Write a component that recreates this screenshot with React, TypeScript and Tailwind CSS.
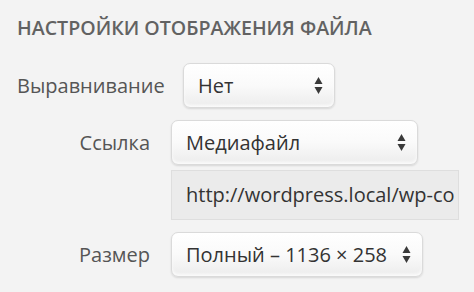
function Arrows() {
  return (
    <svg width="9" height="19" viewBox="0 0 9 19" className="shrink-0">
      <path d="M4.5 1 L8.5 8 L0.5 8 Z" fill="#3a3a3a" />
      <path d="M4.5 18 L8.5 11 L0.5 11 Z" fill="#3a3a3a" />
    </svg>
  );
}

function Select({ value, width }: { value: string; width: string }) {
  return (
    <div
      className={`${width} h-[45px] flex items-center justify-between pl-[14px] pr-[11px] rounded-[7px] border border-[#dadada] bg-gradient-to-b from-white via-[#fafafa] to-[#ececec] shadow-[0_1px_2px_rgba(0,0,0,0.12),inset_0_-2px_3px_rgba(255,255,255,0.8)] text-[20px] text-[#333]`}
    >
      <span className="whitespace-nowrap">{value}</span>
      <Arrows />
    </div>
  );
}

export default function App() {
  return (
    <div
      className="w-[474px] h-[292px] bg-[#f3f3f3] overflow-hidden"
      style={{ fontFamily: '"Open Sans", "Noto Sans", sans-serif' }}
    >
      <div className="pl-[17px] pt-[14px] flex flex-col">
        <h2 className="text-[19.6px] leading-[28px] font-semibold text-[#626262]">
          НАСТРОЙКИ ОТОБРАЖЕНИЯ ФАЙЛА
        </h2>

        <div className="flex items-center mt-[21px]">
          <span className="w-[146px] text-right text-[20px] text-[#555]">Выравнивание</span>
          <div className="ml-[20px]">
            <Select value="Нет" width="w-[152px]" />
          </div>
        </div>

        <div className="flex items-center mt-[12px]">
          <span className="w-[133px] text-right text-[20px] text-[#555]">Ссылка</span>
          <div className="ml-[21px]">
            <Select value="Медиафайл" width="w-[247px]" />
          </div>
        </div>

        <div className="ml-[154px] mt-[5px] w-[288px] h-[50px] flex items-center pl-[14px] pr-[4px] bg-[#ebebeb] border border-[#dedede]">
          <div className="overflow-hidden whitespace-nowrap text-[20px] text-[#333]">http://wordpress.local/wp-content/uploads</div>
        </div>

        <div className="flex items-center mt-[12px]">
          <span className="w-[133px] text-right text-[20px] text-[#555]">Размер</span>
          <div className="ml-[21px]">
            <Select value="Полный – 1136 × 258" width="w-[252px]" />
          </div>
        </div>
      </div>
    </div>
  );
}
